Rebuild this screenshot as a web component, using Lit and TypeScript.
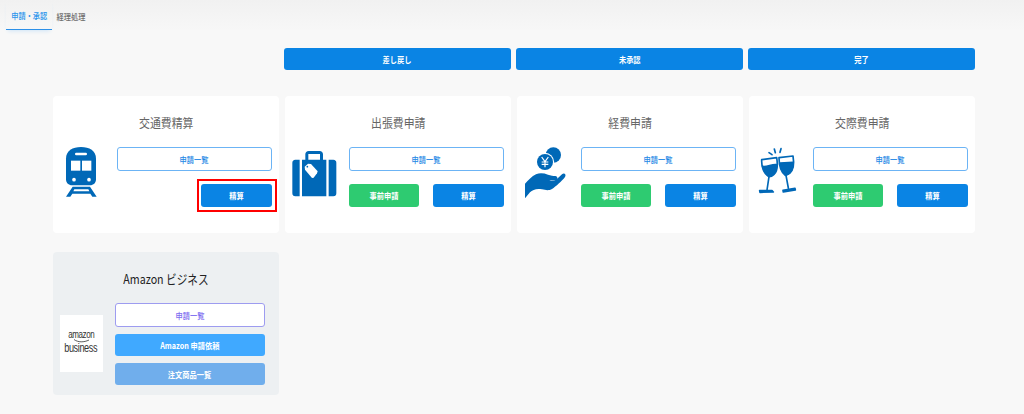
import { LitElement, html, css, svg } from "lit";
import { customElement } from "lit/decorators.js";

const icons: Record<string, unknown> = {
  train: svg`<svg class="ic i-train" width="44" height="60" viewBox="0 0 132 180" fill="#0068b7">
    <path d="M18 50C18 26 38 15 63 15s45 11 45 35v62c0 11-8 18-18 18H36c-10 0-18-7-18-18z"/>
    <rect x="45" y="32" width="36" height="8" rx="4" fill="#fff"/>
    <rect x="33" y="56" width="28" height="30" fill="#fff"/><rect x="66" y="56" width="28" height="30" fill="#fff"/>
    <circle cx="42" cy="113" r="5.5" fill="#fff"/><circle cx="87" cy="113" r="5.5" fill="#fff"/>
    <path d="M38 134h52l20 30H97l-6-9H37l-6 9H18zM43 142l-3 6h48l-3-6z" fill-rule="evenodd"/></svg>`,
  bag: svg`<svg class="ic i-bag" width="52" height="56" viewBox="0 0 156 168" fill="#0068b7">
    <path d="M52 42V25c0-6 4-10 10-10h33c6 0 10 4 10 10v17h-9V24H61v18z"/>
    <path d="M42 41h73v110H42z"/>
    <path d="M22 41h13v110H22c-6 0-9-4-9-9V50c0-5 3-9 9-9zM122 41h14c6 0 9 4 9 9v92c0 5-3 9-9 9h-14z"/>
    <path d="M50 62l10-9 9 1 20 22-2 6-10 13-5 1-21-25z" fill="#fff"/><circle cx="58" cy="62" r="2.6" fill="#0068b7"/></svg>`,
  hand: svg`<svg class="ic i-hand" width="52" height="58" viewBox="0 0 156 174" fill="#0068b7">
    <circle cx="100" cy="36" r="23"/>
    <circle cx="75" cy="57" r="27.5" fill="#fff"/>
    <circle cx="75" cy="57" r="24"/>
    <path d="M65 42l10 14 10-14M75 56v17M65 57h20M65 64h20" fill="none" stroke="#fff" stroke-width="3.5"/>
    <path d="M15 122C25 112 35 100 48 94 60 89 72 91 84 95 92 98 100 98 106 99 114 100 114 110 106 111L88 113C96 115 104 113 110 109L126 94C132 88 140 94 135 102 125 115 108 130 96 138 88 143 78 142 66 139 50 136 38 140 30 148L15 166z"/></svg>`,
  glass: svg`<svg class="ic i-glass" width="52" height="58" viewBox="0 0 156 174" fill="none" stroke="#0068b7" stroke-width="5" stroke-linejoin="round" stroke-linecap="round">
    <path d="M45 29l9 6M61 18l3 11M81 17l-3 11"/>
    <path d="M23 50l45-6c3 18 5 38-8 50-4 4-10 7-15 7-16-8-23-30-22-51z"/>
    <path d="M26 70c12 3 28-7 41-5 0 12-2 22-9 29-4 3-9 6-13 6-9-6-16-18-19-30z" fill="#0068b7"/>
    <path d="M45 101l-6 40M18 148l-1-5 37 0 4 4z"/>
    <path d="M75 44l42-5c3 18 3 40-9 51-4 4-9 6-14 7-14-11-19-32-19-53z"/>
    <path d="M78 60l39-2c0 13-2 24-10 32-4 3-8 5-12 6-9-9-15-22-17-36z" fill="#0068b7"/>
    <path d="M96 97l7 38M88 147l36-6-1-5-36 6z"/></svg>`,
};

type Item = { title: string; icon: string; pre: boolean; mark?: boolean };
const items: Item[] = [
  { title: "交通費精算", icon: "train", pre: false, mark: true },
  { title: "出張費申請", icon: "bag", pre: true },
  { title: "経費申請", icon: "hand", pre: true },
  { title: "交際費申請", icon: "glass", pre: true },
];

@customElement("app-root")
export class AppRoot extends LitElement {
  static styles = css`
    :host { display: block; height: 414px; background: #f8f8f8; font-family: "Noto Sans CJK JP", "Noto Sans", sans-serif; overflow: hidden; }
    .t { display: inline-block; transform: scaleX(.85); white-space: nowrap; }
    .tabs { display: flex; height: 30px; padding-left: 6px; background: linear-gradient(#f1f1f1, #f7f7f7); }
    .tab { width: 46px; height: 30px; box-sizing: border-box; text-align: center; font-size: 8.5px; font-weight: 500; line-height: 33px; color: #6f6f6f; }
    .tab.on { color: #2c96ec; line-height: 31px; border-bottom: 1.5px solid #2c90e8; box-shadow: 0 3px 4px -2px #cfe4f7; }
    .tab + .tab { width: 38px; }
    .main { display: grid; grid-template-columns: repeat(4, 226.5px); column-gap: 5.5px; padding: 17.5px 0 0 52.6px; }
    .top { grid-column: 2 / span 3; display: grid; grid-template-columns: repeat(3, 226.5px); column-gap: 5.5px; margin-bottom: 26px; margin-left: -0.5px; }
    .btn { display: flex; align-items: center; justify-content: center; box-sizing: border-box; border-radius: 3px; font-size: 8.5px; color: #fff; font-weight: 700; height: 22.5px; }
    .blue { background: #0a84e4; }
    .green { background: #2ecb71; }
    .outline { background: #fff; border: 1.2px solid #6cb4f5; color: #1e88e5; height: 24px; grid-column: 1 / span 2; font-weight: 500; }
    .card { background: #fff; border-radius: 4px; height: 137px; box-sizing: border-box; }
    .title { text-align: center; font-size: 12.5px; line-height: 14px; color: #666; padding-top: 20px; height: 51px; box-sizing: border-box; }
    .title .t { transform: scaleX(.87); }
    .body { display: flex; }
    .iconcell { width: 57px; flex: none; height: 54px; }
    .acts { display: grid; grid-template-columns: 70.8px 70.8px; column-gap: 14px; row-gap: 13px; margin-left: 7px; width: 155.6px; }
    .mark { position: relative; grid-column: 2; }
    .mark::after { content: ""; position: absolute; inset: -5px -5px -5px -4px; border: 2px solid #f00; }
    .ic { display: block; overflow: visible; }
    .i-train { margin: -5px 0 0 7px; }
    .i-bag { margin: -1px 0 0 3px; }
    .i-hand { margin: -4px 0 0 3px; }
    .i-glass { margin: -4px 0 0 5px; }
    .amz { background: #edf0f2; height: 143px; margin-top: 19px; border-radius: 4px; grid-column: 1; box-sizing: border-box; padding-top: 19px; }
    .amz .title { color: #222; height: auto; padding: 0; line-height: 16px; font-size: 13px; }
    .amz .title .t { transform: scaleX(.82); }
    .amzbody { display: flex; margin-top: 16px; align-items: flex-start; }
    .logo { width: 43px; height: 57px; background: #fff; margin: 12px 12px 0 7px; flex: none; display: flex; flex-direction: column; align-items: center; color: #333; font-family: "Liberation Sans", sans-serif; padding-top: 15px; box-sizing: border-box; position: relative; }
    .logo span { display: block; line-height: 10px; }
    .l1 { font-size: 10px; letter-spacing: -0.5px; transform: scaleX(.8); }
    .l2 { font-size: 12px; letter-spacing: -0.5px; transform: scaleX(.76); margin-top: 3px; }
    .logo svg { position: absolute; top: 24px; left: 13px; }
    .stack { display: flex; flex-direction: column; gap: 7px; width: 150.5px; }
    .stack .btn { height: 22px; }
    .stack .p { background: #fff; border: 1.2px solid #9d9cf0; color: #7d6df0; height: 24px; font-weight: 500; }
    .a1 { background: #40a9ff; }
    .a2 { background: #70aeec; }
  `;

  card(i: Item) {
    return html`<div class="card">
      <div class="title"><span class="t">${i.title}</span></div>
      <div class="body">
        <div class="iconcell">${icons[i.icon]}</div>
        <div class="acts">
          <div class="btn outline"><span class="t">申請一覧</span></div>
          ${i.pre ? html`<div class="btn green"><span class="t">事前申請</span></div>` : ""}
          <div class="btn blue ${i.mark ? "mark" : ""}"><span class="t">精算</span></div>
        </div>
      </div>
    </div>`;
  }

  render() {
    return html`
      <div class="tabs"><div class="tab on"><span class="t">申請・承認</span></div><div class="tab"><span class="t">経理処理</span></div></div>
      <div class="main">
        <div class="top">
          <div class="btn blue"><span class="t">差し戻し</span></div><div class="btn blue"><span class="t">未承認</span></div><div class="btn blue"><span class="t">完了</span></div>
        </div>
        ${items.map((i) => this.card(i))}
        <div class="amz">
          <div class="title"><span class="t">Amazon ビジネス</span></div>
          <div class="amzbody">
            <div class="logo"><span class="l1">amazon</span>
              <svg width="18" height="4" viewBox="0 0 18 4" fill="none" stroke="#333" stroke-width=".8"><path d="M1 .5c4 3 10 3 15 .5"/></svg>
              <span class="l2">business</span></div>
            <div class="stack">
              <div class="btn p"><span class="t">申請一覧</span></div>
              <div class="btn a1"><span class="t">Amazon 申請依頼</span></div>
              <div class="btn a2"><span class="t">注文商品一覧</span></div>
            </div>
          </div>
        </div>
      </div>`;
  }
}
